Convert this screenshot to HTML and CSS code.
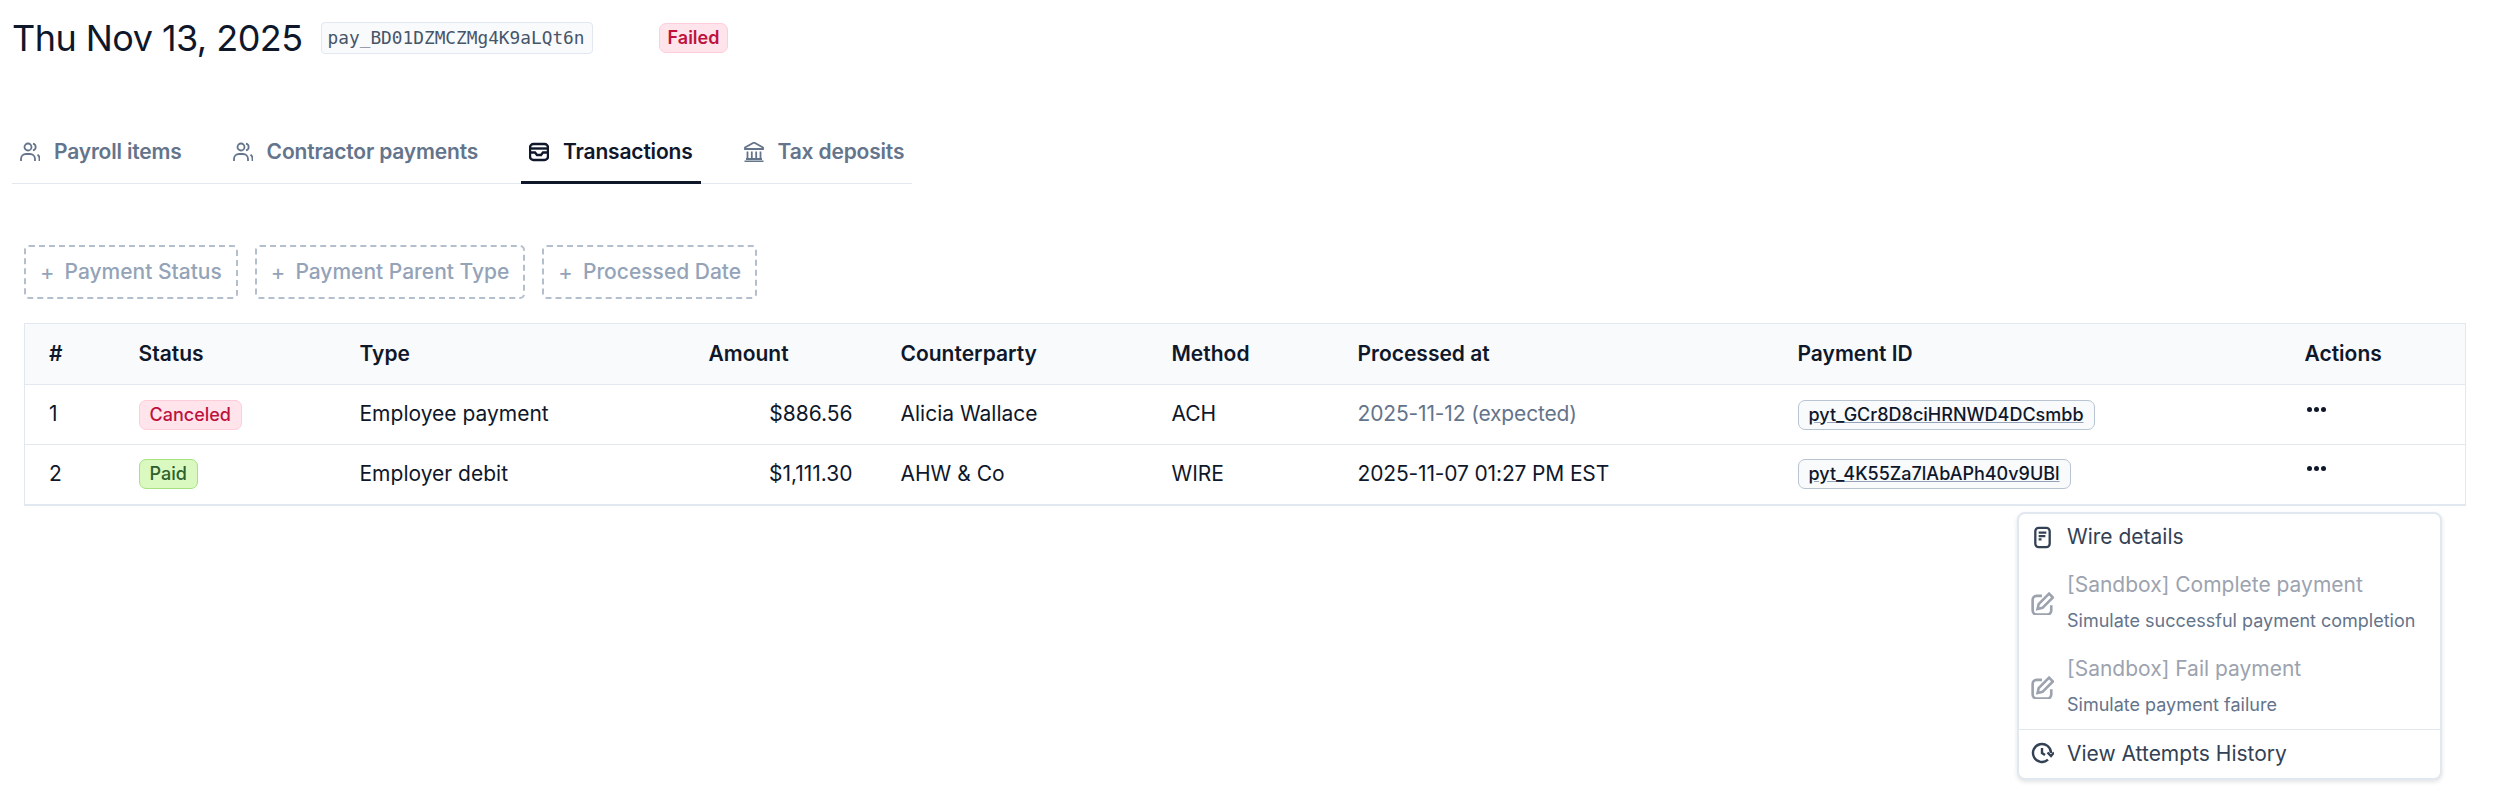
FILE: index.html
```html
<!DOCTYPE html>
<html lang="en">
<head>
  <meta charset="UTF-8" />
  <title>Payroll Thu Nov 13, 2025</title>
  <link rel="stylesheet" href="styles.css">
</head>
<body>
  <header class="page-head">
    <h1>Thu Nov 13, 2025</h1>
    <code class="pay-id">pay_BD01DZMCZMg4K9aLQt6n</code>
    <span class="badge badge-red badge-head">Failed</span>
  </header>

  <nav class="tabs">
    <a class="tab">
      <svg class="tab-icon" viewBox="2 2 20 20"><circle cx="10" cy="7" r="3.5"/><path d="M3 21v-2a5 5 0 0 1 5-5h4a5 5 0 0 1 5 5v2"/><path d="M15 3.600a3.500 3.500 0 0 1 0 6.800"/><path d="M19.500 14.600a5 5 0 0 1 2 4.400v2"/></svg>
      Payroll items
    </a>
    <a class="tab">
      <svg class="tab-icon" viewBox="2 2 20 20"><circle cx="10" cy="7" r="3.5"/><path d="M3 21v-2a5 5 0 0 1 5-5h4a5 5 0 0 1 5 5v2"/><path d="M15 3.600a3.500 3.500 0 0 1 0 6.800"/><path d="M19.500 14.600a5 5 0 0 1 2 4.400v2"/></svg>
      Contractor payments
    </a>
    <a class="tab active">
      <svg class="tab-icon" viewBox="2 2 20 20"><rect x="3" y="4" width="18" height="16" rx="3.500"/><path d="M3 8.500h18"/><path d="M3 12.500h5l2 2.500h4l2-2.500h5"/></svg>
      Transactions
    </a>
    <a class="tab">
      <svg class="tab-icon" viewBox="2 2 20 20"><path d="M12 2.500 3 7.500v1.500h18V7.500z"/><path d="M5.500 11.500v6.500M9.800 11.500v6.500M14.200 11.500v6.500M18.500 11.500v6.500"/><path d="M4 19h16M2.500 21.300h19"/></svg>
      Tax deposits
    </a>
  </nav>

  <section class="content">
    <div class="filters">
      <button class="filter"><span class="plus">+</span>Payment Status</button>
      <button class="filter"><span class="plus">+</span>Payment Parent Type</button>
      <button class="filter"><span class="plus">+</span>Processed Date</button>
    </div>

    <table class="tx-table">
      <colgroup>
        <col class="c-num"><col class="c-status"><col class="c-type"><col class="c-amount">
        <col class="c-party"><col class="c-method"><col class="c-date"><col class="c-id"><col class="c-actions">
      </colgroup>
      <thead>
        <tr>
          <th>#</th><th>Status</th><th>Type</th><th>Amount</th><th>Counterparty</th>
          <th>Method</th><th>Processed at</th><th>Payment ID</th><th>Actions</th>
        </tr>
      </thead>
      <tbody>
        <tr>
          <td>1</td>
          <td><span class="badge badge-red">Canceled</span></td>
          <td>Employee payment</td>
          <td class="num">$886.56</td>
          <td>Alicia Wallace</td>
          <td>ACH</td>
          <td class="date muted">2025-11-12 (expected)</td>
          <td><a class="chip">pyt_GCr8D8ciHRNWD4DCsmbb</a></td>
          <td><span class="dots"><i></i><i></i><i></i></span></td>
        </tr>
        <tr>
          <td>2</td>
          <td><span class="badge badge-green">Paid</span></td>
          <td>Employer debit</td>
          <td class="num">$1,111.30</td>
          <td>AHW &amp; Co</td>
          <td>WIRE</td>
          <td class="date">2025-11-07 01:27 PM EST</td>
          <td><a class="chip">pyt_4K55Za7lAbAPh40v9UBl</a></td>
          <td><span class="dots"><i></i><i></i><i></i></span></td>
        </tr>
      </tbody>
    </table>
  </section>

  <div class="menu">
    <div class="menu-item first">
      <svg class="menu-icon" viewBox="0 0 24 24"><rect x="4.500" y="2" width="15" height="20" rx="3.500"/><path d="M8 7h8M8 10.500h7M8 14h3"/></svg>
      <div class="menu-text"><div class="menu-title">Wire details</div></div>
    </div>
    <div class="menu-item disabled">
      <svg class="menu-icon" viewBox="1 1 21 21"><path d="M17.500 2.500l3.500 3.500L11.500 15.500l-4.500 1 1-4.500z"/><path d="M11 4.500H6A3.500 3.500 0 0 0 2.500 8v10A3.500 3.500 0 0 0 6 21.500h10a3.500 3.500 0 0 0 3.500-3.500v-5"/></svg>
      <div class="menu-text">
        <div class="menu-title">[Sandbox] Complete payment</div>
        <div class="menu-desc">Simulate successful payment completion</div>
      </div>
    </div>
    <div class="menu-item disabled">
      <svg class="menu-icon" viewBox="1 1 21 21"><path d="M17.500 2.500l3.500 3.500L11.500 15.500l-4.500 1 1-4.500z"/><path d="M11 4.500H6A3.500 3.500 0 0 0 2.500 8v10A3.500 3.500 0 0 0 6 21.500h10a3.500 3.500 0 0 0 3.500-3.500v-5"/></svg>
      <div class="menu-text">
        <div class="menu-title">[Sandbox] Fail payment</div>
        <div class="menu-desc">Simulate payment failure</div>
      </div>
    </div>
    <div class="menu-item last">
      <svg class="menu-icon" viewBox="1 1 23 23"><path d="M21 12a9 9 0 1 0-3 6.700"/><path d="M12 7v5l3 2"/><path d="M17.500 11.500l3.500 3.500 3-3.500"/></svg>
      <div class="menu-text"><div class="menu-title">View Attempts History</div></div>
    </div>
  </div>
</body>
</html>
```

FILE: styles.css
```css
* {
  box-sizing: border-box;
}
html, body {
  margin: 0;
  height: 100%;
  overflow: hidden;
}
body {
  position: relative;
  font-family: Inter, "Noto Sans", sans-serif;
  font-size: 21px;
  color: #0f172a;
  background: white;
  padding: 0 30px 0 12px;
}
.page-head {
  display: flex;
  align-items: center;
  height: 32px;
  margin-top: 22px;
}
h1 {
  font-size: 36px;
  font-weight: 400;
  letter-spacing: -0.55px;
  line-height: 32px;
  margin: 0 18px 0 0;
  white-space: nowrap;
}
.pay-id {
  font-family: "DejaVu Sans Mono", monospace;
  font-size: 17.800px;
  color: #475569;
  background: #f8fafc;
  border: 1px solid #e2e8f0;
  border-radius: 4px;
  padding: 0 6px;
  height: 32px;
  width: 272px;
  line-height: 30px;
  white-space: nowrap;
}
.badge {
  display: inline-block;
  font-size: 18px;
  font-weight: 500;
  line-height: 28px;
  height: 30px;
  padding: 0 10px;
  margin-top: 2px;
  border-radius: 7px;
  border: 1px solid;
  vertical-align: middle;
}
.badge-head {
  margin: 0 0 0 66px;
  padding: 0 8px;
  font-weight: 600;
}
.badge-red {
  color: #be123c;
  background: #ffe4ec;
  border-color: #fecdd9;
}
.badge-green {
  color: #2f5f2e;
  background: #d9f9c0;
  border-color: #a6e37f;
}
.tabs {
  display: flex;
  gap: 35px;
  width: 900px;
  height: 65px;
  margin-top: 65px;
  border-bottom: 1px solid #e2e8f0;
}
.tab {
  display: flex;
  align-items: center;
  gap: 14px;
  padding: 0 8px;
  height: 65px;
  font-weight: 600;
  letter-spacing: -0.18px;
  color: #64748b;
  white-space: nowrap;
}
.tab.active {
  color: #0f172a;
  box-shadow: inset 0 -3px 0 #0f172a;
}
.tab-icon {
  width: 20px;
  height: 20px;
  flex: none;
  fill: none;
  stroke: currentColor;
  stroke-width: 1.800;
}
.tab.active .tab-icon {
  stroke-width: 2.400;
}
.content {
  padding: 61px 0 0 12px;
}
.filters {
  display: flex;
  gap: 17px;
}
.filter {
  display: flex;
  align-items: center;
  height: 54px;
  padding: 0 14px 1px;
  font-family: inherit;
  font-size: 21px;
  font-weight: 500;
  color: #94a3b8;
  background: white;
  border: 2px dashed #b4bfcd;
  border-radius: 5px;
  white-space: nowrap;
}
.plus {
  font-size: 22px;
  font-weight: 400;
  margin-right: 10px;
}
.tx-table {
  width: 2442px;
  margin-top: 24px;
  border-collapse: collapse;
  table-layout: fixed;
  border: 1px solid #e2e8f0;
  border-bottom-width: 2px;
}
.c-num { width: 90px; }
.c-status { width: 221px; }
.c-type { width: 349px; }
.c-amount { width: 192px; }
.c-party { width: 271px; }
.c-method { width: 186px; }
.c-date { width: 440px; }
.c-id { width: 507px; }
th, td {
  text-align: left;
  padding: 0 24px 2px;
  height: 60px;
  white-space: nowrap;
  border-bottom: 1px solid #e2e8f0;
}
th {
  height: 61px;
  font-weight: 600;
  background: #f8fafc;
}
td.num {
  text-align: right;
}
td.date {
  letter-spacing: -0.15px;
}
td.muted {
  color: #64748b;
}
.chip {
  display: inline-block;
  font-size: 18px;
  font-weight: 500;
  line-height: 28px;
  height: 30px;
  padding: 0 10px;
  margin-top: 2px;
  color: #0f172a;
  background: #f8fafc;
  border: 1px solid #b9c4d2;
  border-radius: 7px;
  text-decoration: underline;
  text-decoration-color: #94a3b8;
  vertical-align: middle;
}
.dots {
  display: flex;
  gap: 2px;
  margin: -7px 0 0 2px;
}
.dots i {
  width: 5px;
  height: 5px;
  border-radius: 50%;
  background: #0f172a;
}
.menu {
  position: absolute;
  left: 2017px;
  top: 512px;
  width: 425px;
  height: 268px;
  background: white;
  border: 2px solid #e2e8f0;
  border-radius: 8px;
  box-shadow: 0 2px 4px rgba(15, 23, 42, 0.12);
}
.menu-item {
  display: flex;
  align-items: center;
  gap: 13px;
  padding: 0 12px;
  height: 44px;
  color: #334155;
}
.menu-item.first {
  height: 47px;
  padding-bottom: 1px;
}
.menu-item.disabled {
  height: 84px;
  color: #9ca3af;
}
.menu-item.last {
  height: 49px;
  padding-bottom: 1px;
  border-top: 1px solid #e2e8f0;
}
.menu-icon {
  width: 23px;
  height: 23px;
  flex: none;
  fill: none;
  stroke: currentColor;
  stroke-width: 2.400;
}
.menu-title {
  font-size: 21px;
  line-height: 24px;
}
.menu-desc {
  font-size: 18px;
  line-height: 24px;
  margin-top: 12px;
  color: #64748b;
}
```
